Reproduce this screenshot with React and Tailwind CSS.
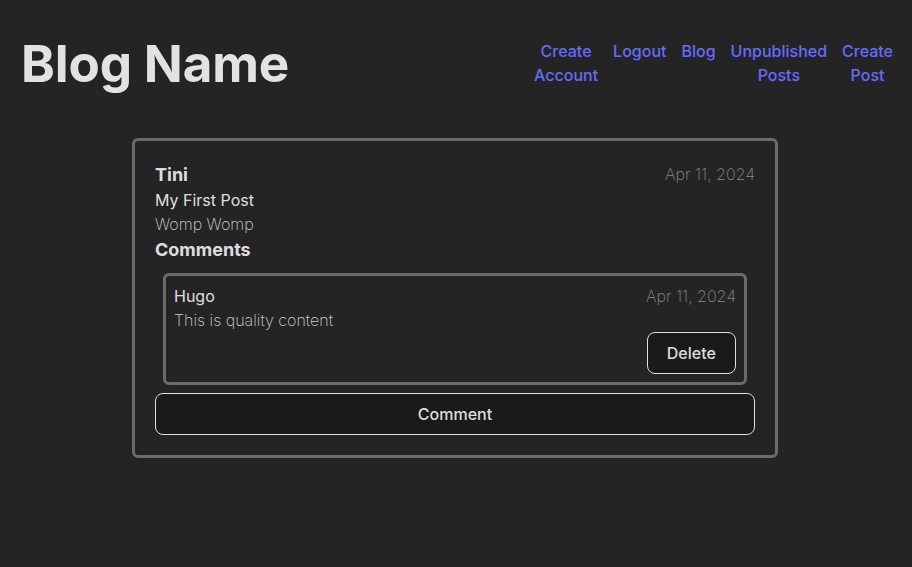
export default function App() {
    const links = ["Create Account", "Logout", "Blog", "Unpublished Posts", "Create Post"]

    return (
        <div className="min-h-[567px] w-full bg-[#242424] font-['Inter',sans-serif] text-[16px] leading-[1.5] text-[rgba(255,255,255,0.87)]">
            <header className="flex items-center justify-between pl-[21px] pr-[19px] pt-[35px]">
                <h1 className="text-[51.2px] font-bold leading-[1.1] tracking-[-0.15px]">Blog Name</h1>
                <nav className="flex gap-[15px]">
                    {links.map((l) => (
                        <a key={l} className="w-min text-center font-medium text-[#646cff]">
                            {l}
                        </a>
                    ))}
                </nav>
            </header>

            <div className="mt-[47px] flex justify-center pr-[2px]">
                <div className="w-[646px] rounded-md border-[3px] border-[#6b6b6b] p-5">
                    <div className="flex items-start justify-between">
                        <p className="text-[18px] font-bold">Tini</p>
                        <p className="mt-px font-extralight text-[#8a8a8a]">Apr 11, 2024</p>
                    </div>
                    <p>My First Post</p>
                    <p className="font-extralight text-[#d0d0d0]">Womp Womp</p>
                    <p className="text-[18px] font-bold">Comments</p>

                    <div className="mx-2 mt-[10px] flex flex-col rounded-md border-[3px] border-[#6b6b6b] p-2">
                        <div className="flex justify-between">
                            <p>Hugo</p>
                            <p className="font-extralight text-[#8a8a8a]">Apr 11, 2024</p>
                        </div>
                        <p className="font-extralight text-[#d0d0d0]">This is quality content</p>
                        <div className="flex justify-end">
                            <button className="rounded-lg border border-[#e0e0e0] bg-[#1a1a1a] px-[19.2px] py-[9.6px] font-medium leading-[1.25]">
                                Delete
                            </button>
                        </div>
                    </div>

                    <button className="mt-2 w-full rounded-lg border border-[#e0e0e0] bg-[#1a1a1a] px-[19.2px] py-[10px] font-medium leading-[1.25]">
                        Comment
                    </button>
                </div>
            </div>
        </div>
    )
}
